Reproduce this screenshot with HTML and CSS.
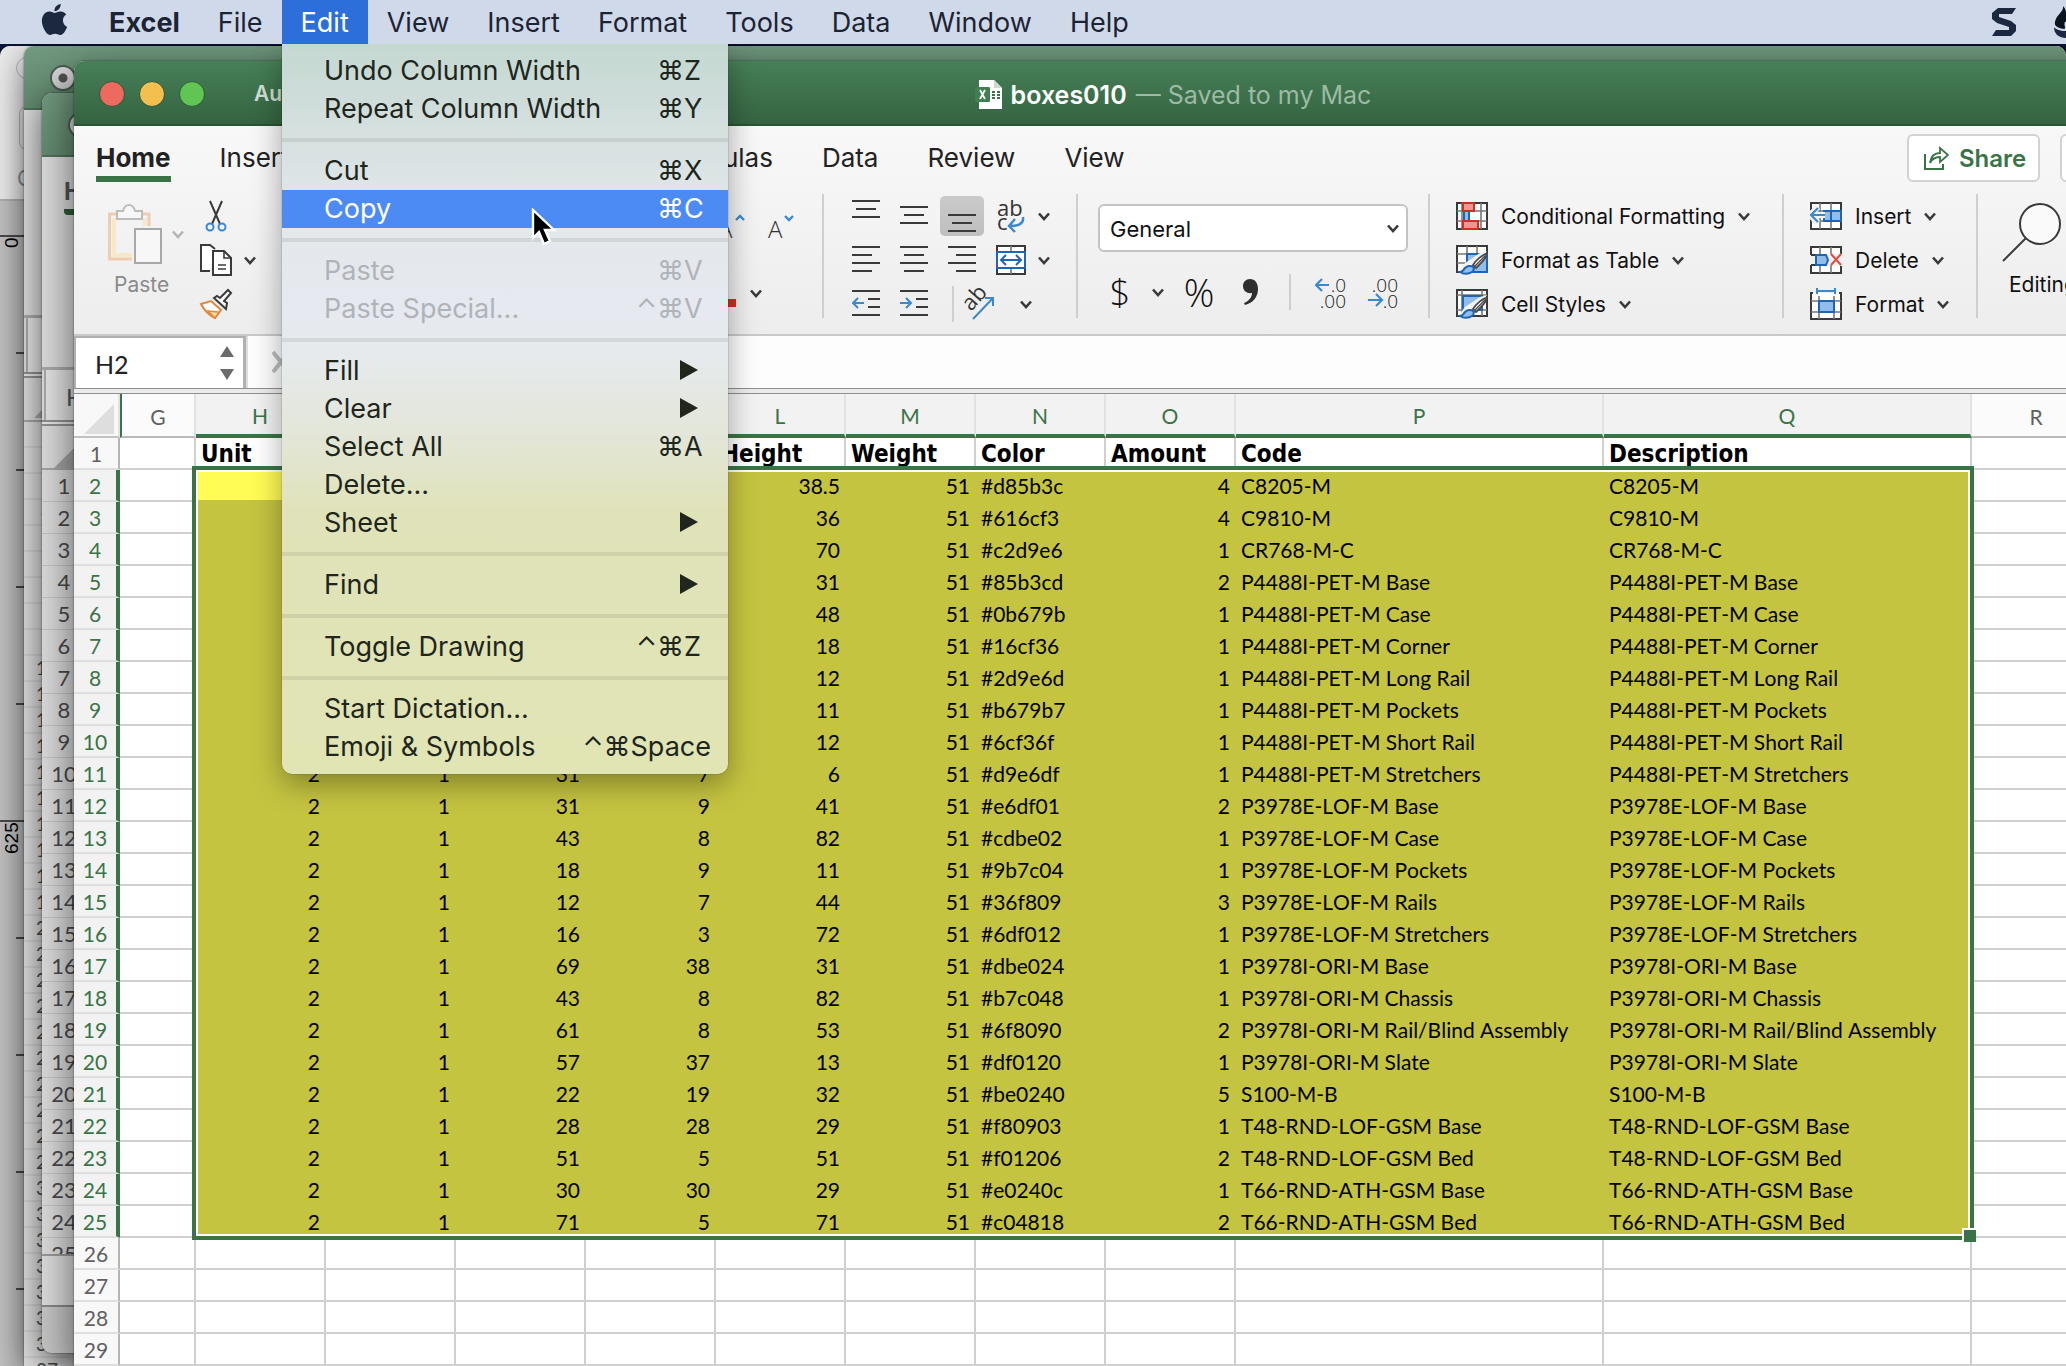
FILE: index.html
```html
<!DOCTYPE html>
<html lang="en">
<head>
<meta charset="utf-8">
<title>boxes010</title>
<link rel="stylesheet" href="styles.css">
</head>
<body>
<svg class="defs" aria-hidden="true">
  <symbol id="chev" viewBox="0 0 12 9"><path d="M1 1.500 6 7 11 1.500" fill="none" stroke="currentColor" stroke-width="2.600"/></symbol>
  <symbol id="tri" viewBox="0 0 18 20"><path d="M0 0 18 10 0 20z" fill="currentColor"/></symbol>
  <symbol id="brush" viewBox="0 0 32 30">
    <path d="M31 6 12 27 2 27 9 18 24 8z" fill="#f2f2f2"/>
    <path d="M31 9c-4 0-11 6-14 11l3 3c4-4 10-9 11-14z" fill="#fff" stroke="#4a4a4a" stroke-width="1.800"/>
    <path d="M19 21 29 11" stroke="#4a4a4a" stroke-width="1.400"/>
    <path d="M4 27c3 0 3-2 5-4s6-3 8-1 0 5-3 6-7 1-10-1z" fill="#90bde9" stroke="#2065b4" stroke-width="2"/>
  </symbol>
</svg>

<header class="menubar">
  <button class="mb-apple" aria-label="Apple"><svg width="31" height="31" viewBox="0 0 24 24" fill="currentColor"><path d="M12.152 6.896c-.948 0-2.415-1.078-3.960-1.040-2.040.027-3.910 1.183-4.961 3.014-2.117 3.675-.546 9.103 1.519 12.090 1.013 1.454 2.208 3.090 3.792 3.039 1.520-.065 2.090-.987 3.935-.987 1.831 0 2.350.987 3.960.948 1.637-.026 2.676-1.480 3.676-2.948 1.156-1.688 1.636-3.325 1.662-3.415-.039-.013-3.182-1.221-3.220-4.857-.026-3.040 2.480-4.494 2.597-4.559-1.429-2.090-3.623-2.324-4.390-2.376-2-.156-3.675 1.090-4.610 1.090zM15.530 3.830c.843-1.012 1.400-2.427 1.245-3.830-1.207.052-2.662.805-3.532 1.818-.780.896-1.454 2.338-1.273 3.714 1.338.104 2.715-.688 3.559-1.701"/></svg></button>
  <button class="mb-item strong">Excel</button>
  <button class="mb-item">File</button>
  <button class="mb-item open">Edit</button>
  <button class="mb-item">View</button>
  <button class="mb-item">Insert</button>
  <button class="mb-item">Format</button>
  <button class="mb-item">Tools</button>
  <button class="mb-item">Data</button>
  <button class="mb-item">Window</button>
  <button class="mb-item">Help</button>
  <div class="mb-status">
    <svg width="24" height="28" viewBox="0 0 24 28"><path d="M6 0H24L20 6H7V9L19 13 24 17V23L19 28H0L4 22H17V19L5 15 0 11V5z" fill="#1c2840"/></svg>
    <svg width="30" height="32" viewBox="0 0 30 32"><path d="M9 0C10 6 2 9 1 16c-1 4 3 6 5 7 5 2 12 1 16-3-3-2-3-6-6-7-1 2-2 3-3 2C11 10 14 5 9 0z" fill="#0b1220"/><path d="M0 21c4 4 9 4 13 3 6-1 9-1 12-4-1 8-7 12-13 12C5 32 0 28 0 21z" fill="#1c2840"/><path d="M12 16c-2 4 2 5-1 8M0 20c3 3 8 4 12 4" fill="none" stroke="#d0d9ea" stroke-width="2"/></svg>
  </div>
</header>

<main class="desktop">
  <section class="win win-a">
    <div class="a-top"><i class="a-pill"></i><i class="a-box"></i><span class="a-text">C</span></div>
    <ul class="ruler"><li class="major">0</li><li></li><li></li><li></li><li></li><li class="major">625</li><li></li><li></li><li></li><li></li></ul>
  </section>

  <section class="win win-b">
    <div class="bg-title"><i class="off-light"></i></div>
    <div class="b-ribbon"></div>
    <div class="bg-formula"></div>
    <div class="bg-corner"><svg width="26" height="26"><path d="M26 0V26H0z" fill="#a5a5a5"/></svg></div>
    <ol class="nums nums-b"><li>1</li><li>2</li><li>3</li><li>4</li><li>5</li><li>6</li><li>7</li><li>8</li><li>9</li><li>10</li><li>11</li><li>12</li><li>13</li><li>14</li><li>15</li><li>16</li><li>17</li><li>18</li><li>19</li><li>20</li><li>21</li><li>22</li><li>23</li><li>24</li><li>25</li><li>26</li><li>27</li><li>28</li><li>29</li><li>30</li><li>31</li><li>32</li><li>33</li><li>34</li><li>35</li><li>36</li><li>37</li></ol>
  </section>

  <section class="win win-c">
    <div class="bg-title"><i class="off-light"></i></div>
    <div class="c-ribbon"><span class="c-home">Home</span></div>
    <div class="bg-formula">H2</div>
    <div class="bg-corner"><svg width="30" height="30"><path d="M30 0V30H0z" fill="#a5a5a5"/></svg></div>
    <ol class="nums nums-c"><li>1</li><li>2</li><li>3</li><li>4</li><li>5</li><li>6</li><li>7</li><li>8</li><li>9</li><li>10</li><li>11</li><li>12</li><li>13</li><li>14</li><li>15</li><li>16</li><li>17</li><li>18</li><li>19</li><li>20</li><li>21</li><li>22</li><li>23</li><li>24</li><li>25</li></ol>
    <div class="c-tabs"></div>
    <div class="c-status"></div>
  </section>

  <section class="win win-main">
    <div class="titlebar">
      <div class="tb-left">
        <button class="light red" aria-label="Close"></button><button class="light amber" aria-label="Minimise"></button><button class="light green" aria-label="Zoom"></button>
        <span class="autosave">AutoSave</span>
      </div>
      <div class="tb-title">
        <svg width="27" height="29" viewBox="0 0 27 29"><path d="M4 0H19L27 8V29H4z" fill="#fff"/><path d="M19 0V8H27z" fill="#cfd8d2"/><path d="M17 11h3v2h-3zM22 11h3v2h-3zM17 14h3v2h-3zM22 14h3v2h-3zM17 17h3v2h-3zM22 17h3v2h-3z" fill="#3a7446"/><rect y="7" width="15" height="15" rx="1" fill="#3f7f50"/><path d="M5 10 10 19M10 10 5 19" stroke="#fff" stroke-width="1.800"/></svg>
        <h1>boxes010</h1><span class="saved">— Saved to my Mac</span>
      </div>
    </div>

    <div class="ribbon">
      <div class="tabs">
        <div class="tabs-left">
          <button class="tab active">Home</button><button class="tab">Insert</button><button class="tab">Draw</button><button class="tab">Page Layout</button>
        </div>
        <div class="tabs-right">
          <button class="tab">Formulas</button><button class="tab">Data</button><button class="tab">Review</button><button class="tab">View</button>
        </div>
        <div class="tabs-actions">
          <button class="pill"><svg width="25" height="24" viewBox="0 0 25 24" fill="none" stroke="#3a7446" stroke-width="2"><path d="M1 8V23H19V18"/><path d="M6 17C7 10 11 7 16 7V2L24 9 16 16V11C11 11 8 13 6 17z" stroke-width="1.800"/></svg>Share</button>
          <button class="pill">Comments</button>
        </div>
      </div>

      <div class="groups">
        <div class="g-clip">
          <button class="paste" disabled>
            <span class="paste-icon">
            <svg width="54" height="60" viewBox="0 0 54 60" fill="none"><path d="M9 10H1.500V55H24M33 10H41V22" stroke="#f0cdb0" stroke-width="3"/><path d="M6 14V51H24M37 14V22" stroke="#f5e8cb" stroke-width="4"/><path d="M9 7H15C16 3 18 1 21 1S26 3 27 7H34V15H9z" fill="#f7f7f7" stroke="#bdbdbd" stroke-width="2"/><rect x="27" y="25" width="26" height="34" fill="#f7f7f7" stroke="#a8a8a8" stroke-width="2"/></svg>
            <svg class="chev"><use href="#chev"/></svg></span>
            <span>Paste</span>
          </button>
          <div class="clip-col">
            <button class="ic" aria-label="Cut"><svg width="34" height="34" viewBox="0 0 34 34" fill="none"><path d="M11 2 21 25M23 2 13 25" stroke="#3a3a3a" stroke-width="2"/><circle cx="11" cy="28" r="3.500" stroke="#3a89cf" stroke-width="2"/><circle cx="23" cy="28" r="3.500" stroke="#3a89cf" stroke-width="2"/></svg></button>
            <button class="ic" aria-label="Copy"><svg width="34" height="34" viewBox="0 0 34 34" fill="none" stroke="#3a3a3a" stroke-width="2"><path d="M11 28H2V2H11L16 6" fill="#fff"/><path d="M14 8H25L32 15V32H14z" fill="#fff"/><path d="M25 8V15H32M19 22H27M19 26H27" stroke-width="1.600"/></svg><svg class="chev"><use href="#chev"/></svg></button>
            <button class="ic" aria-label="Format painter"><svg width="34" height="34" viewBox="0 0 34 34" fill="none"><path d="M2 17 12 14 22 23 16 31C10 28 5 23 2 17z" fill="#fff" stroke="#e2873c" stroke-width="2"/><path d="M9 24 20 25 16 31z" fill="#f7dc9a" stroke="#e2873c" stroke-width="1.400"/><path d="M15 11 27 22 28 16 25 14 32 6 29 3 21 11 18 9z" fill="#fff" stroke="#3a3a3a" stroke-width="2"/></svg></button>
          </div>
        </div>
        <div class="g-font">
          <button class="ic" aria-label="Grow font"><svg width="32" height="32" viewBox="0 0 32 32"><text x="0" y="27" class="t24">A</text><path d="M18 9 22 5 26 9" fill="none" stroke="#3a89cf" stroke-width="2.400"/></svg></button>
          <button class="ic" aria-label="Shrink font"><svg width="32" height="32" viewBox="0 0 32 32"><text x="4" y="27" class="t24">A</text><path d="M21 5 25 9 29 5" fill="none" stroke="#3a89cf" stroke-width="2.400"/></svg></button>
          <button class="ic font-color" aria-label="Font colour"><svg width="32" height="32" viewBox="0 0 32 32"><text x="5" y="20" class="t24">A</text><rect y="22" width="32" height="8" fill="#d92b1e"/></svg><svg class="chev"><use href="#chev"/></svg></button>
        </div>
        <i class="sep"></i>
        <div class="g-align">
          <div class="arow">
            <button class="ic" aria-label="Top align"><svg width="28" height="36" viewBox="0 0 28 36" stroke="#3a3a3a" stroke-width="2"><path d="M0 3H28M4 11H24M0 19H28"/></svg></button>
            <button class="ic" aria-label="Middle align"><svg width="28" height="36" viewBox="0 0 28 36" stroke="#3a3a3a" stroke-width="2"><path d="M0 9H28M4 17H24M0 25H28"/></svg></button>
            <button class="ic on" aria-label="Bottom align"><svg width="28" height="36" viewBox="0 0 28 36" stroke="#3a3a3a" stroke-width="2"><path d="M0 17H28M4 25H24M0 33H28"/></svg></button>
            <button class="ic" aria-label="Wrap text"><svg width="30" height="34" viewBox="0 0 30 34"><text x="1" y="17" class="t22">ab</text><text x="1" y="31" class="t22">c</text><path d="M27 18C28 25 22 27 14 27M19 20 13 27 19 33" fill="none" stroke="#3a89cf" stroke-width="2.400"/></svg></button>
            <svg class="chev"><use href="#chev"/></svg>
          </div>
          <div class="arow">
            <button class="ic" aria-label="Align left"><svg width="28" height="28" viewBox="0 0 28 28" stroke="#3a3a3a" stroke-width="2"><path d="M0 1H28M0 9H20M0 17H28M0 25H20"/></svg></button>
            <button class="ic" aria-label="Centre"><svg width="28" height="28" viewBox="0 0 28 28" stroke="#3a3a3a" stroke-width="2"><path d="M0 1H28M4 9H24M0 17H28M4 25H24"/></svg></button>
            <button class="ic" aria-label="Align right"><svg width="28" height="28" viewBox="0 0 28 28" stroke="#3a3a3a" stroke-width="2"><path d="M0 1H28M8 9H28M0 17H28M8 25H28"/></svg></button>
            <button class="ic" aria-label="Merge"><svg width="30" height="30" viewBox="0 0 30 30" fill="none"><rect x="1" y="1" width="28" height="28" fill="#fff" stroke="#3a3a3a" stroke-width="2"/><path d="M15 1V29" stroke="#777" stroke-width="1.600"/><rect x="1" y="7" width="28" height="16" fill="#fff" stroke="#2065b4" stroke-width="2"/><path d="M5 15H25M10 10 5 15 10 20M20 10 25 15 20 20" stroke="#2065b4" stroke-width="2"/></svg></button>
            <svg class="chev"><use href="#chev"/></svg>
          </div>
          <div class="arow indent">
            <button class="ic" aria-label="Decrease indent"><svg width="28" height="28" viewBox="0 0 28 28" fill="none" stroke="#3a3a3a" stroke-width="2"><path d="M0 1H28M16 9H28M16 17H28M0 25H28"/><path d="M12 13H1M6 8 1 13 6 18" stroke="#3a89cf"/></svg></button>
            <button class="ic" aria-label="Increase indent"><svg width="28" height="28" viewBox="0 0 28 28" fill="none" stroke="#3a3a3a" stroke-width="2"><path d="M0 1H28M16 9H28M16 17H28M0 25H28"/><path d="M0 13H11M6 8 11 13 6 18" stroke="#3a89cf"/></svg></button>
            <i class="sep-s"></i>
            <button class="ic" aria-label="Orientation"><svg width="34" height="34" viewBox="0 0 34 34"><text class="t22" transform="translate(10 25) rotate(-48)">ab</text><path d="M12 32 32 11M24 11H32V19" fill="none" stroke="#3a89cf" stroke-width="2"/></svg></button>
            <svg class="chev"><use href="#chev"/></svg>
          </div>
        </div>
        <i class="sep"></i>
        <div class="g-num">
          <div class="select-wrap"><select aria-label="Number format"><option>General</option></select><svg class="chev"><use href="#chev"/></svg></div>
          <div class="num-row">
            <button class="ic sym">$</button><svg class="chev"><use href="#chev"/></svg>
            <button class="ic sym pct">%</button>
            <button class="ic" aria-label="Comma style"><svg width="16" height="26" viewBox="0 0 16 26"><path d="M7 0C12 0 15 4 15 10 15 18 10 24 2 26L1 24C6 22 9 18 9 14 3 15 0 11 0 7S3 0 7 0z" fill="#2f2f2f"/></svg></button>
            <i class="sep-s"></i>
            <button class="ic" aria-label="Increase decimal"><svg width="32" height="34" viewBox="0 0 32 34"><text x="31" y="17" class="t19">.0</text><text x="31" y="33" class="t19">.00</text><path d="M14 10H1M7 4 1 10 7 16" fill="none" stroke="#3a89cf" stroke-width="2.200"/></svg></button>
            <button class="ic" aria-label="Decrease decimal"><svg width="32" height="34" viewBox="0 0 32 34"><text x="31" y="17" class="t19">.00</text><text x="31" y="33" class="t19">.0</text><path d="M1 25H15M9 19 15 25 9 31" fill="none" stroke="#3a89cf" stroke-width="2.200"/></svg></button>
          </div>
        </div>
        <i class="sep"></i>
        <div class="g-list">
          <button class="lb"><svg width="32" height="28" viewBox="0 0 32 28"><rect x="1" y="1" width="30" height="26" fill="#fff" stroke="#3a3a3a" stroke-width="2"/><path d="M6 1V27M25 1V27M1 9H31M1 19H31" stroke="#777" stroke-width="1.600"/><rect x="8" y="9" width="5" height="10" fill="#90bde9" stroke="#2065b4" stroke-width="2"/><rect x="7" y="1" width="11" height="8" fill="#f09494" stroke="#c8321f" stroke-width="2"/><rect x="7" y="19" width="15" height="8" fill="#f09494" stroke="#c8321f" stroke-width="2"/></svg>Conditional Formatting<svg class="chev"><use href="#chev"/></svg></button>
          <button class="lb"><svg width="32" height="30" viewBox="0 0 32 30"><rect x="1" y="1" width="30" height="26" fill="#fff" stroke="#3a3a3a" stroke-width="2"/><path d="M11 1V27M21 1V9M1 9H31M1 18H11" stroke="#777" stroke-width="1.600"/><rect x="11" y="9" width="20" height="18" fill="#90bde9" stroke="#2065b4" stroke-width="2"/><use href="#brush"/></svg>Format as Table<svg class="chev"><use href="#chev"/></svg></button>
          <button class="lb"><svg width="32" height="30" viewBox="0 0 32 30"><rect x="1" y="1" width="30" height="26" fill="#fff" stroke="#3a3a3a" stroke-width="2"/><path d="M6 1V27M26 1V27M1 6H31M1 21H31" stroke="#777" stroke-width="1.600"/><rect x="7" y="7" width="19" height="14" fill="#90bde9" stroke="#2065b4" stroke-width="2"/><use href="#brush"/></svg>Cell Styles<svg class="chev"><use href="#chev"/></svg></button>
        </div>
        <i class="sep"></i>
        <div class="g-list">
          <button class="lb"><svg width="32" height="28" viewBox="0 0 32 28" fill="none"><rect x="1" y="1" width="30" height="26" fill="#fff" stroke="#3a3a3a" stroke-width="2"/><path d="M10 1V27M21 1V27M1 9H31M1 19H31" stroke="#777" stroke-width="1.600"/><rect x="14" y="9" width="17" height="10" fill="#90bde9" stroke="#2065b4" stroke-width="2"/><path d="M21 9V19" stroke="#2065b4" stroke-width="2"/><path d="M0 13H15M8 5 0 13 8 21" stroke="#f2f2f2" stroke-width="6"/><path d="M1 13H15M8 6 1 13 8 20" stroke="#3a89cf" stroke-width="2.200"/></svg>Insert<svg class="chev"><use href="#chev"/></svg></button>
          <button class="lb"><svg width="32" height="28" viewBox="0 0 32 28" fill="none"><path d="M1 9V1H31V8M1 19V27H31V20M1 9H8M1 19H8" fill="#fff" stroke="#3a3a3a" stroke-width="2"/><path d="M10 1V9M21 1V8M10 19V27M21 19V27" stroke="#777" stroke-width="1.600"/><path d="M6 9H16L18 14 16 19H6z" fill="#90bde9" stroke="#2065b4" stroke-width="2"/><path d="M21 8 31 19M31 8 21 19" stroke="#f2f2f2" stroke-width="6"/><path d="M21 8 31 19M31 8 21 19" stroke="#e04b40" stroke-width="2"/></svg>Delete<svg class="chev"><use href="#chev"/></svg></button>
          <button class="lb"><svg width="32" height="32" viewBox="0 0 32 32" fill="none"><path d="M3 5H1V31H31V5H29" fill="#fff" stroke="#3a3a3a" stroke-width="2"/><path d="M9 8V31M24 8V31M1 13H31M1 24H31" stroke="#777" stroke-width="1.600"/><rect x="9" y="13" width="15" height="11" fill="#90bde9" stroke="#2065b4" stroke-width="2"/><path d="M7 0V6M25 0V6M7 3H25" stroke="#3a89cf" stroke-width="2"/></svg>Format<svg class="chev"><use href="#chev"/></svg></button>
        </div>
        <i class="sep"></i>
        <div class="g-edit"><button class="editing"><svg width="60" height="60" viewBox="0 0 60 60"><circle cx="38" cy="21" r="20" fill="#fafafa" stroke="#3a3a3a" stroke-width="2"/><path d="M24 35 1 58" stroke="#3a3a3a" stroke-width="2"/></svg><span>Editing</span></button></div>
      </div>
    </div>

    <div class="formula">
      <div class="namebox"><input value="H2" aria-label="Name box"><svg width="14" height="34" viewBox="0 0 14 34"><path d="M7 0 14 11H0zM7 34 14 23H0z" fill="#6b6b6b"/></svg></div>
      <button class="cancel" aria-label="Cancel"><svg width="20" height="22" viewBox="0 0 20 22"><path d="M1 1 17 21M17 1 1 21" stroke="#bcbcbc" stroke-width="4"/></svg></button>
      <input class="fx" aria-label="Formula">
    </div>
    <div class="splitter"></div>

    <div class="sheet">
      <table>
        <colgroup><col class="c-row"><col class="c-g"><col class="c-n" span="8"><col class="c-w" span="2"><col class="c-n"></colgroup>
        <thead><tr><th class="corner"><svg width="30" height="30"><path d="M30 0V30H0z" fill="#dedede"/></svg></th><th class="plain first">G</th><th>H</th><th>I</th><th>J</th><th>K</th><th>L</th><th>M</th><th>N</th><th>O</th><th>P</th><th>Q</th><th class="plain">R</th></tr></thead>
        <tbody class="names"><tr><th>1</th><td></td><td>Unit</td><td></td><td></td><td></td><td>Height</td><td>Weight</td><td>Color</td><td>Amount</td><td>Code</td><td>Description</td><td></td></tr></tbody>
        <tbody class="picked">
<tr><th>2</th><td></td><td class="cur"></td><td></td><td></td><td></td><td>38.5</td><td>51</td><td>#d85b3c</td><td>4</td><td>C8205-M</td><td>C8205-M</td><td></td></tr>
<tr><th>3</th><td></td><td></td><td></td><td></td><td></td><td>36</td><td>51</td><td>#616cf3</td><td>4</td><td>C9810-M</td><td>C9810-M</td><td></td></tr>
<tr><th>4</th><td></td><td></td><td></td><td></td><td></td><td>70</td><td>51</td><td>#c2d9e6</td><td>1</td><td>CR768-M-C</td><td>CR768-M-C</td><td></td></tr>
<tr><th>5</th><td></td><td></td><td></td><td></td><td></td><td>31</td><td>51</td><td>#85b3cd</td><td>2</td><td>P4488I-PET-M Base</td><td>P4488I-PET-M Base</td><td></td></tr>
<tr><th>6</th><td></td><td></td><td></td><td></td><td></td><td>48</td><td>51</td><td>#0b679b</td><td>1</td><td>P4488I-PET-M Case</td><td>P4488I-PET-M Case</td><td></td></tr>
<tr><th>7</th><td></td><td></td><td></td><td></td><td></td><td>18</td><td>51</td><td>#16cf36</td><td>1</td><td>P4488I-PET-M Corner</td><td>P4488I-PET-M Corner</td><td></td></tr>
<tr><th>8</th><td></td><td></td><td></td><td></td><td></td><td>12</td><td>51</td><td>#2d9e6d</td><td>1</td><td>P4488I-PET-M Long Rail</td><td>P4488I-PET-M Long Rail</td><td></td></tr>
<tr><th>9</th><td></td><td></td><td></td><td></td><td></td><td>11</td><td>51</td><td>#b679b7</td><td>1</td><td>P4488I-PET-M Pockets</td><td>P4488I-PET-M Pockets</td><td></td></tr>
<tr><th>10</th><td></td><td></td><td></td><td></td><td></td><td>12</td><td>51</td><td>#6cf36f</td><td>1</td><td>P4488I-PET-M Short Rail</td><td>P4488I-PET-M Short Rail</td><td></td></tr>
<tr><th>11</th><td></td><td>2</td><td>1</td><td>31</td><td>7</td><td>6</td><td>51</td><td>#d9e6df</td><td>1</td><td>P4488I-PET-M Stretchers</td><td>P4488I-PET-M Stretchers</td><td></td></tr>
<tr><th>12</th><td></td><td>2</td><td>1</td><td>31</td><td>9</td><td>41</td><td>51</td><td>#e6df01</td><td>2</td><td>P3978E-LOF-M Base</td><td>P3978E-LOF-M Base</td><td></td></tr>
<tr><th>13</th><td></td><td>2</td><td>1</td><td>43</td><td>8</td><td>82</td><td>51</td><td>#cdbe02</td><td>1</td><td>P3978E-LOF-M Case</td><td>P3978E-LOF-M Case</td><td></td></tr>
<tr><th>14</th><td></td><td>2</td><td>1</td><td>18</td><td>9</td><td>11</td><td>51</td><td>#9b7c04</td><td>1</td><td>P3978E-LOF-M Pockets</td><td>P3978E-LOF-M Pockets</td><td></td></tr>
<tr><th>15</th><td></td><td>2</td><td>1</td><td>12</td><td>7</td><td>44</td><td>51</td><td>#36f809</td><td>3</td><td>P3978E-LOF-M Rails</td><td>P3978E-LOF-M Rails</td><td></td></tr>
<tr><th>16</th><td></td><td>2</td><td>1</td><td>16</td><td>3</td><td>72</td><td>51</td><td>#6df012</td><td>1</td><td>P3978E-LOF-M Stretchers</td><td>P3978E-LOF-M Stretchers</td><td></td></tr>
<tr><th>17</th><td></td><td>2</td><td>1</td><td>69</td><td>38</td><td>31</td><td>51</td><td>#dbe024</td><td>1</td><td>P3978I-ORI-M Base</td><td>P3978I-ORI-M Base</td><td></td></tr>
<tr><th>18</th><td></td><td>2</td><td>1</td><td>43</td><td>8</td><td>82</td><td>51</td><td>#b7c048</td><td>1</td><td>P3978I-ORI-M Chassis</td><td>P3978I-ORI-M Chassis</td><td></td></tr>
<tr><th>19</th><td></td><td>2</td><td>1</td><td>61</td><td>8</td><td>53</td><td>51</td><td>#6f8090</td><td>2</td><td>P3978I-ORI-M Rail/Blind Assembly</td><td>P3978I-ORI-M Rail/Blind Assembly</td><td></td></tr>
<tr><th>20</th><td></td><td>2</td><td>1</td><td>57</td><td>37</td><td>13</td><td>51</td><td>#df0120</td><td>1</td><td>P3978I-ORI-M Slate</td><td>P3978I-ORI-M Slate</td><td></td></tr>
<tr><th>21</th><td></td><td>2</td><td>1</td><td>22</td><td>19</td><td>32</td><td>51</td><td>#be0240</td><td>5</td><td>S100-M-B</td><td>S100-M-B</td><td></td></tr>
<tr><th>22</th><td></td><td>2</td><td>1</td><td>28</td><td>28</td><td>29</td><td>51</td><td>#f80903</td><td>1</td><td>T48-RND-LOF-GSM Base</td><td>T48-RND-LOF-GSM Base</td><td></td></tr>
<tr><th>23</th><td></td><td>2</td><td>1</td><td>51</td><td>5</td><td>51</td><td>51</td><td>#f01206</td><td>2</td><td>T48-RND-LOF-GSM Bed</td><td>T48-RND-LOF-GSM Bed</td><td></td></tr>
<tr><th>24</th><td></td><td>2</td><td>1</td><td>30</td><td>30</td><td>29</td><td>51</td><td>#e0240c</td><td>1</td><td>T66-RND-ATH-GSM Base</td><td>T66-RND-ATH-GSM Base</td><td></td></tr>
<tr><th>25</th><td></td><td>2</td><td>1</td><td>71</td><td>5</td><td>71</td><td>51</td><td>#c04818</td><td>2</td><td>T66-RND-ATH-GSM Bed</td><td>T66-RND-ATH-GSM Bed</td><td></td></tr>
        </tbody>
        <tbody class="blank">
<tr><th>26</th><td></td><td></td><td></td><td></td><td></td><td></td><td></td><td></td><td></td><td></td><td></td><td></td></tr>
<tr><th>27</th><td></td><td></td><td></td><td></td><td></td><td></td><td></td><td></td><td></td><td></td><td></td><td></td></tr>
<tr><th>28</th><td></td><td></td><td></td><td></td><td></td><td></td><td></td><td></td><td></td><td></td><td></td><td></td></tr>
<tr><th>29</th><td></td><td></td><td></td><td></td><td></td><td></td><td></td><td></td><td></td><td></td><td></td><td></td></tr>
        </tbody>
      </table>
      <div class="selection"></div>
    </div>
  </section>

  <div class="menu" role="menu">
    <button class="mi">Undo Column Width<kbd>⌘<b>Z</b></kbd></button>
    <button class="mi">Repeat Column Width<kbd>⌘<b>Y</b></kbd></button>
    <hr>
    <button class="mi">Cut<kbd>⌘<b>X</b></kbd></button>
    <button class="mi hot">Copy<kbd>⌘<b>C</b></kbd></button>
    <hr>
    <button class="mi" disabled>Paste<kbd>⌘<b>V</b></kbd></button>
    <button class="mi" disabled>Paste Special...<kbd>⌃⌘<b>V</b></kbd></button>
    <hr>
    <button class="mi">Fill<svg class="tri"><use href="#tri"/></svg></button>
    <button class="mi">Clear<svg class="tri"><use href="#tri"/></svg></button>
    <button class="mi">Select All<kbd>⌘<b>A</b></kbd></button>
    <button class="mi">Delete...</button>
    <button class="mi">Sheet<svg class="tri"><use href="#tri"/></svg></button>
    <hr>
    <button class="mi">Find<svg class="tri"><use href="#tri"/></svg></button>
    <hr>
    <button class="mi">Toggle Drawing<kbd>⌃⌘<b>Z</b></kbd></button>
    <hr>
    <button class="mi">Start Dictation...</button>
    <button class="mi wide">Emoji &amp; Symbols<kbd>⌃⌘<b>Space</b></kbd></button>
  </div>
  <svg class="cursor" width="26" height="40" viewBox="0 0 26 40"><path d="M2 2V30L8 24 13 36 19 33 14 22H23z" fill="#000" stroke="#fff" stroke-width="2.400"/></svg>
</main>
</body>
</html>
```
FILE: styles.css
```css
* { box-sizing: border-box; }
html, body { height: 100%; }
body {
  margin: 0;
  display: flex;
  flex-direction: column;
  overflow: hidden;
  background: #0d1a3d;
  font-family: Inter, "Liberation Sans", sans-serif;
  color: #222;
}
button {
  border: 0;
  padding: 0;
  margin: 0;
  background: none;
  font: inherit;
  color: inherit;
  white-space: nowrap;
}
input, select { font: inherit; color: inherit; border: 0; padding: 0; outline: 0; }
svg { display: block; flex: none; }
.defs { position: absolute; width: 0; height: 0; }
.chev { width: 12px; height: 9px; color: #3a3a3a; }

/* Menu bar */
.menubar {
  flex: none;
  height: 44px;
  display: flex;
  background: #d0d9ea;
  font-size: 27px;
  color: #1c2433;
}
.mb-apple { width: 90px; padding: 4px 0 0 39px; color: #1c2840; }
.mb-apple svg { margin-top: -9px; }
.mb-item { padding: 0 19px; }
.mb-item.strong { font-weight: 700; }
.mb-item.open { background: #2c6fdb; color: #fff; }
.mb-status { margin-left: auto; margin-right: -18px; display: flex; align-items: center; gap: 38px; }

/* Desktop and the stacked windows */
.desktop { position: relative; flex: 1; overflow: hidden; }
.win {
  position: absolute;
  bottom: 0;
  overflow: hidden;
  border-radius: 10px 10px 0 0;
  box-shadow: 0 10px 34px rgba(0, 0, 0, .55), 0 0 2px rgba(0, 0, 0, .6);
}
.win-a { left: 0; right: 0; top: 2px; background: #c2c2c2; }
.win-b { left: 24px; right: 0; top: 2px; background: #dcdcdc; }
.win-c { left: 42px; right: 20px; top: 49px; bottom: 13px; background: #dcdcdc; border-radius: 10px; }
.win-main { left: 74px; right: -206px; top: 17px; background: #fff; box-shadow: 0 14px 44px rgba(0, 0, 0, .6), 0 0 2px rgba(0, 0, 0, .6); }

.a-top { position: relative; height: 155px; background: #ebebeb; border-bottom: 2px solid #b0b0b0; }
.a-pill, .a-box { position: absolute; left: 16px; top: 11px; width: 60px; height: 22px; border: 1px solid #b5b5b5; border-radius: 11px; }
.a-box { left: 19px; top: 60px; height: 44px; border-radius: 8px; }
.a-text { position: absolute; left: 17px; top: 120px; font-size: 21px; color: #8a8a8a; }
.ruler { list-style: none; margin: 0; padding: 34px 0 0; width: 24px; display: flex; flex-direction: column; align-items: flex-end; font: 19px "Liberation Sans", sans-serif; color: #000; }
.ruler li { width: 8px; height: 117px; border-top: 2px solid #4a4a4a; }
.ruler li.major { width: 24px; writing-mode: vertical-rl; transform: rotate(180deg); text-align: right; line-height: 24px; border-top: 0; border-bottom: 2px solid #4a4a4a; }

.bg-title { height: 64px; padding: 19px 26px; background: linear-gradient(#71997f, #628a6f); border-bottom: 2px solid #4f7159; }
.off-light { display: block; width: 26px; height: 26px; border-radius: 50%; border: 2px solid #4b5e51; background: radial-gradient(circle, #555 0 4px, #d8d8d8 5px); }
.b-ribbon { height: 208px; border-bottom: 3px solid #a9a9a9; }
.bg-formula { height: 54px; margin: 0 0 0 2px; padding: 16px 0 0 20px; font-size: 24px; line-height: 30px; color: #555; background: #e4e4e4; border-left: 2px solid #a9a9a9; }
.bg-corner { height: 50px; padding: 18px 0 0 10px; border-top: 2px solid #8f8f8f; border-bottom: 2px solid #a5a5a5; box-shadow: inset 0 2px #e6e6e6, inset 0 4px #8f8f8f; }
.nums { list-style: none; margin: 0; padding: 0; width: 46px; text-align: center; font-family: Lato, sans-serif; color: #4a4a4a; }
.nums-b { font-size: 19px; line-height: 24px; }
.nums-b li { height: 26px; border-bottom: 2px solid #cfcfcf; }
.c-ribbon { height: 213px; padding: 20px 0 0 22px; border-bottom: 3px solid #a9a9a9; }
.c-home { display: inline-block; height: 38px; font-size: 24px; font-weight: 700; color: #555; border-bottom: 6px solid #2c5e38; border-radius: 0 0 4px 4px; }
.win-c .bg-formula { height: 50px; padding-top: 12px; font-family: Lato, sans-serif; }
.nums-c { height: 784px; overflow: hidden; width: 44px; font-size: 22px; line-height: 32px; }
.nums-c li { height: 32px; border-bottom: 1px solid #c4c4c4; }
.c-tabs { height: 53px; border-top: 2px solid #999; border-bottom: 2px solid #888; }
.c-status { height: 60px; background: #c6c6c6; }

/* Title bar */
.titlebar { position: relative; height: 65px; padding-top: 4px; display: flex; align-items: center; justify-content: center; background: linear-gradient(#478058, #346440); border-bottom: 2px solid #2a5234; }
.tb-left { position: absolute; left: 25px; top: 0; height: 65px; display: flex; align-items: center; gap: 14px; color: #cfdfd3; font-size: 21px; font-weight: 600; }
.light { width: 26px; height: 26px; border-radius: 50%; border: 1px solid #2d5839; }
.red { background: #ec6a5e; }
.amber { background: #f5bf4f; }
.green { background: #61c554; }
.autosave { margin-left: 35px; }
.tb-title { display: flex; align-items: center; gap: 9px; font-size: 25px; color: #fff; }
.tb-title h1 { margin: 0; font-size: 25px; font-weight: 600; }
.saved { color: #9dbaa4; }

/* Ribbon */
.ribbon { height: 210px; background: linear-gradient(#f8f8f8, #ededed); border-bottom: 2px solid #c9c9c9; }
.tabs { height: 64px; display: flex; font-size: 26px; }
.tabs-left, .tabs-right { display: flex; gap: 49px; align-items: center; }
.tabs-left { width: 586px; padding-left: 22px; }
.tab { height: 64px; padding-bottom: 2px; }
.tab.active { font-weight: 700; background: linear-gradient(#3a7446, #3a7446) 0 50px / 100% 6px no-repeat; }
.tabs-actions { margin-left: auto; width: 365px; display: flex; gap: 20px; align-items: center; }
.pill { height: 48px; padding: 0 12px 0 15px; display: flex; align-items: center; gap: 10px; background: #fff; border: 2px solid #d2d2d2; border-radius: 6px; font-size: 24px; font-weight: 600; color: #3a7446; }
.groups { display: grid; grid-template-columns: 208px 540px 2px 252px 2px 350px 2px 352px 2px 192px 2px auto; padding-top: 4px; font-size: 21px; color: #111; }
.sep { height: 124px; background: #cfcfcf; }
.sep-s { width: 2px; height: 36px; background: #cfcfcf; }
.ic { display: flex; align-items: center; justify-content: center; }
.t24 { font: 300 24px "Open Sans", sans-serif; fill: #333; }
.t22 { font: 22px "Open Sans", sans-serif; fill: #333; }
.t19 { font: 300 19px "Open Sans", sans-serif; fill: #222; text-anchor: end; }

.g-clip { display: flex; padding-left: 34px; gap: 15px; }
.paste { width: 76px; padding-top: 10px; display: flex; flex-direction: column; align-items: flex-start; gap: 8px; color: #8a8a8a; }
.paste > span:last-child { padding-left: 6px; }
.paste-icon { display: flex; align-items: center; gap: 10px; }
.paste .chev { color: #b5b5b5; }
.clip-col { display: grid; grid-template-rows: repeat(3, 44px); justify-items: start; }
.clip-col .ic { gap: 11px; }
.g-font { display: grid; grid-template-columns: 46px 58px; grid-template-rows: 66px 66px; justify-content: end; }
.g-font .ic { justify-content: start; }
.font-color { grid-column: 1 / 3; gap: 14px; margin-left: -14px; }

.g-align { display: grid; grid-template-rows: repeat(3, 44px); padding-left: 20px; }
.arow { display: grid; grid-template-columns: 44px 44px 44px 46px 12px; gap: 4px; align-items: center; }
.arow .ic { height: 40px; }
.arow .on { background: linear-gradient(#cacaca, #bfbfbf); border-radius: 5px; }
.arow.indent { grid-template-columns: 44px 44px 2px 34px 12px; gap: 4px; }
.indent .sep-s { margin-left: 12px; width: 2px; }
.indent .ic:nth-of-type(3) { margin-left: 30px; }
.indent .chev { margin-left: 36px; }

.g-num { padding: 10px 20px 0; }
.select-wrap { position: relative; }
.select-wrap select { width: 100%; height: 48px; padding: 2px 0 0 10px; appearance: none; background: #fff; border: 2px solid #c4c4c4; border-radius: 6px; font-size: 22px; }
.select-wrap .chev { position: absolute; right: 9px; top: 20px; }
.num-row { display: flex; align-items: center; height: 80px; padding-left: 12px; }
.sym { font: 300 36px "Open Sans", sans-serif; width: 20px; }
.num-row .chev { margin: 0 17px 0 22px; }
.sym.pct { font-size: 38px; width: 36px; margin-right: 26px; }
.num-row .sep-s { margin: 0 24px 0 30px; }
.num-row .ic + .ic:last-child { margin-left: 20px; }

.g-list { display: grid; grid-template-rows: repeat(3, 44px); justify-items: start; padding-left: 26px; }
.lb { display: flex; align-items: center; gap: 13px; }
.lb svg:first-child { width: 32px; }
.g-edit { padding-left: 24px; }
.editing { padding-top: 9px; display: flex; flex-direction: column; align-items: flex-start; gap: 9px; }
.editing span { padding-left: 7px; }

/* Formula bar */
.formula { height: 52px; display: flex; background: #fdfdfd; }
.namebox { width: 172px; display: flex; align-items: center; background: #fff; border: solid #b0b0b0; border-width: 2px 3px 0 2px; box-shadow: 2px 0 #dcdcdc; }
.namebox input { width: 144px; padding: 2px 0 0 19px; font: 25px Lato, sans-serif; background: none; }
.cancel { width: 64px; padding-left: 26px; }
.fx { flex: 1; background: none; }
.splitter { height: 6px; border: solid #8f8f8f; border-width: 1px 0; background: #ececec; }

/* Sheet */
.sheet { position: relative; font: 21px Lato, sans-serif; font-kerning: none; color: #000; }
table { table-layout: fixed; width: 2028px; border-collapse: separate; border-spacing: 0; }
.c-row { width: 46px; }
.c-g { width: 76px; }
.c-n { width: 130px; }
.c-w { width: 368px; }
th, td { height: 32px; padding: 2px 4px 0 5px; line-height: 28px; border: solid #d0d0d0; border-width: 0 2px 2px 0; white-space: nowrap; text-align: left; font-weight: 400; }
thead th { height: 44px; padding: 4px 0 0; text-align: center; color: #3a7446; background: #f2f2f2; border-bottom: 4px solid #3a7446; border-right-color: #e2e2e2; }
thead th.plain { color: #606060; background: #fbfbfb; border-bottom: 2px solid #bababa; }
thead th.first { border-left: 2px solid #3a7446; }
thead th.corner { padding: 8px 0 0 10px; background: #f8f8f8; border-bottom: 2px solid #c2c2c2; }
tbody th { padding: 2px 0 0; text-align: center; color: #606060; background: #f8f8f8; border-right-color: #b5b5b5; border-bottom-color: #dedede; }
.names td { font: bold 24px "DejaVu Sans Condensed", "DejaVu Sans", sans-serif; line-height: 28px; }
.picked th { color: #3a7446; background: #f2f2f2; border-right: 4px solid #3a7446; }
.picked td { background: #c5c441; border-color: #c5c441; text-align: right; }
.picked td:nth-child(2), .picked td:last-child { background: #fff; border-color: #d0d0d0; }
.picked td:nth-child(9), .picked td:nth-child(11), .picked td:nth-child(12) { text-align: left; }
.picked td.cur { background: #fffc55; border-color: #fffc55 #fffc55 #c5c441; }
.selection { position: absolute; left: 118px; top: 72px; width: 1782px; height: 774px; border: 4px solid #3a7446; box-shadow: inset 0 0 0 2px #fff; }
.selection::after { content: ""; position: absolute; right: -6px; bottom: -6px; width: 12px; height: 12px; background: #3a7446; border: solid #fff; border-width: 2px 0 0 2px; }

/* Edit menu */
.menu {
  position: absolute;
  left: 282px;
  top: 0;
  width: 446px;
  padding: 8px 0;
  background: linear-gradient(#c4d8d1, #d5e0df 12%, #e3e8ea 24%, #e6e9f0 36%, #e6eaec 43%, #e3e6d9 53%, #e0e3b9 64%, #e1e4b3);
  border-radius: 0 0 10px 10px;
  box-shadow: 0 10px 30px rgba(0, 0, 0, .35), 0 0 1px rgba(0, 0, 0, .8);
  font-size: 27px;
  color: #20261c;
}
.mi { width: 100%; height: 38px; padding: 0 24px 2px 42px; display: flex; align-items: center; justify-content: space-between; }
.mi:disabled { color: #b0b3b9; }
.mi.hot { background: #4c8bf3; color: #fff; }
.mi.wide { padding-right: 17px; }
.mi kbd { display: flex; font: inherit; }
.mi b { min-width: 20px; font-weight: 400; text-align: left; }
.menu hr { margin: 10px 0; height: 4px; border: 0; background: rgba(0, 0, 0, .08); }
.tri { width: 18px; height: 20px; margin-right: 6px; }
.cursor { position: absolute; left: 531px; top: 164px; }
```
